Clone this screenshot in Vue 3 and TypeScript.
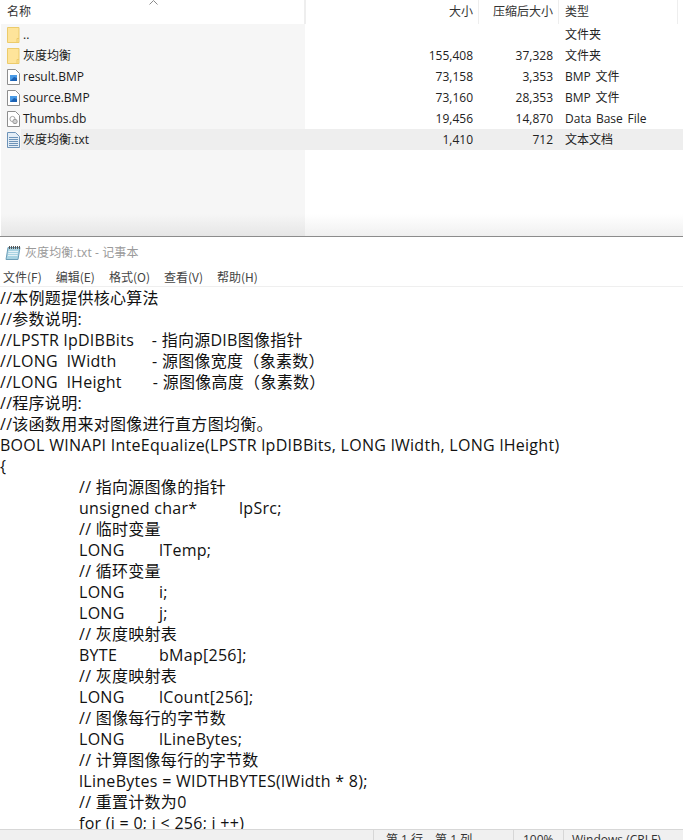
<script setup lang="ts">
interface Row { name: string; size: string; packed: string; type: string; icon: 'folder' | 'bmp' | 'db' | 'txt'; active?: boolean }
const rows: Row[] = [
  { name: '..', size: '', packed: '', type: '文件夹', icon: 'folder' },
  { name: '灰度均衡', size: '155,408', packed: '37,328', type: '文件夹', icon: 'folder' },
  { name: 'result.BMP', size: '73,158', packed: '3,353', type: 'BMP 文件', icon: 'bmp' },
  { name: 'source.BMP', size: '73,160', packed: '28,353', type: 'BMP 文件', icon: 'bmp' },
  { name: 'Thumbs.db', size: '19,456', packed: '14,870', type: 'Data Base File', icon: 'db' },
  { name: '灰度均衡.txt', size: '1,410', packed: '712', type: '文本文档', icon: 'txt', active: true },
]
const menus = ['文件(F)', '编辑(E)', '格式(O)', '查看(V)', '帮助(H)']
const position = '第 1 行\uFF0C第 1 列'
const lines: string[] = [
  '//本例题提供核心算法', '//参数说明:', '//LPSTR lpDIBBits    - 指向源DIB图像指针',
  '//LONG  lWidth        - 源图像宽度\uFF08象素数\uFF09', '//LONG  lHeight       - 源图像高度\uFF08象素数\uFF09',
  '//程序说明:', '//该函数用来对图像进行直方图均衡。',
  'BOOL WINAPI InteEqualize(LPSTR lpDIBBits, LONG lWidth, LONG lHeight)', '{',
  '\t// 指向源图像的指针', '\tunsigned char*\tlpSrc;', '\t// 临时变量', '\tLONG\tlTemp;',
  '\t// 循环变量', '\tLONG\ti;', '\tLONG\tj;', '\t// 灰度映射表', '\tBYTE\tbMap[256];',
  '\t// 灰度映射表', '\tLONG\tlCount[256];', '\t// 图像每行的字节数', '\tLONG\tlLineBytes;',
  '\t// 计算图像每行的字节数', '\tlLineBytes = WIDTHBYTES(lWidth * 8);', '\t// 重置计数为0',
  '\tfor (i = 0; i < 256; i ++)',
]
</script>

<template>
  <div class="page">
    <section class="explorer">
      <div class="sort-mark"><svg width="9" height="5" viewBox="0 0 9 5"><path d="M.5 4.5 L4.5 .5 L8.5 4.5" fill="none" stroke="#8a8a8a" /></svg></div>
      <div class="head">
        <div class="c-name h-cell">名称</div>
        <div class="c-size h-cell sep">大小</div>
        <div class="c-packed h-cell sep">压缩后大小</div>
        <div class="c-type h-cell sep">类型</div>
      </div>
      <div class="list">
        <div class="name-shade"></div>
        <div class="fade"></div>
        <div v-for="r in rows" :key="r.name" class="row" :class="{ active: r.active }">
          <div class="c-name name-cell">
            <span class="ico">
              <svg v-if="r.icon === 'folder'" width="13" height="16" viewBox="0 0 13 16"><path d="M.5.5h11.5v15H.5z" fill="#fee49a" stroke="#eccb6a" /><path d="M10 15.5v-4h2" fill="none" stroke="#eccb6a" /></svg>
              <svg v-else width="13" height="16" viewBox="0 0 13 16">
                <path d="M.5.5h8l4 4v11H.5z" :fill="r.icon === 'txt' ? '#e3edf6' : '#fff'" :stroke="r.icon === 'txt' ? '#6d93b8' : '#8e8e8e'" />
                <template v-if="r.icon === 'bmp'"><rect x="3" y="6" width="7" height="6" fill="#4a9be6" /><path d="M3 12l4-4 3 1v3z" fill="#1c62b4" /></template>
                <template v-if="r.icon === 'db'"><circle cx="5.5" cy="8" r="2.6" fill="none" stroke="#a5a5a5" /><circle cx="8" cy="10.5" r="2.2" fill="#d0d0d0" stroke="#9a9a9a" /></template>
                <path v-if="r.icon === 'txt'" d="M2 5.5h9M2 7.5h9M2 9.5h9M2 11.5h9M2 13.5h9" stroke="#6d93b8" fill="none" />
              </svg>
            </span>
            <span class="name-text">{{ r.name }}</span>
          </div>
          <div class="c-size num">{{ r.size }}</div>
          <div class="c-packed num">{{ r.packed }}</div>
          <div class="c-type type-cell">{{ r.type }}</div>
        </div>
      </div>
    </section>

    <section class="notepad">
      <div class="title">
        <svg width="16" height="17" viewBox="0 0 16 17"><path d="M3 3.5h12l-2 12H1z" fill="#a8d3e2" stroke="#6e9fb8" /><path d="M4.5 2v3M6.5 2v3M8.5 2v3M10.5 2v3M12.5 2v3M14.5 2v3" stroke="#555" /><path d="M3.5 7.5h9.5M3.2 9.5h9.5M3 11.5h9.5" stroke="#e4f1f6" /></svg>
        <span>灰度均衡.txt - 记事本</span>
      </div>
      <div class="menu"><span v-for="m in menus" :key="m">{{ m }}</span></div>
      <div class="text">
        <div v-for="(l, i) in lines" :key="i" class="line" :class="{ tabbed: l.startsWith('\t') }">{{ l }}</div>
      </div>
      <div class="status">
        <span class="s s1"></span>
        <span class="s s2">{{ position }}</span>
        <span class="s s3">100%</span>
        <span class="s s4">Windows (CRLF)</span>
      </div>
    </section>
  </div>
</template>

<style>
html, body { margin: 0; background: #fff; }
</style>

<style scoped>
.page { width: 683px; height: 840px; overflow: hidden; display: flex; flex-direction: column; font-family: "Noto Sans CJK SC", "Liberation Sans", sans-serif; color: #1a1a1a; position: relative; }
.explorer { height: 236px; flex: none; border-bottom: 1px solid #8c8c8c; position: relative; font-family: "Open Sans", "Noto Sans CJK SC", sans-serif; font-size: 12px; }
.sort-mark { position: absolute; left: 149px; top: 0; line-height: 0; }
.head { display: flex; height: 24px; }
.h-cell { line-height: 23px; color: #333; }
.sep { border-left: 1px solid #eee; }
.c-name { width: 305px; flex: none; }
.c-size { width: 173px; flex: none; box-sizing: border-box; text-align: right; padding-right: 5px; }
.c-packed { width: 80px; flex: none; box-sizing: border-box; text-align: right; padding-right: 5px; }
.c-type { flex: 1; padding-left: 7px; }
.head .c-name { padding-left: 7px; box-sizing: border-box; border-right: 1px solid #eee; }
.head .c-type { border-right: 1px solid #eee; margin-right: 5px; padding-left: 6px; }
.list { position: relative; }
.name-shade { position: absolute; left: 1px; top: 0; width: 304px; height: 212px; background-image: linear-gradient(#f6f6f6 190px, #e6e6e6 212px); }
.fade { position: absolute; left: 305px; right: 0; top: 190px; height: 22px; background-image: linear-gradient(#ffffff, #f0f0f0); }
.row { display: flex; height: 21px; line-height: 21px; position: relative; }
.name-cell { display: flex; align-items: center; box-sizing: border-box; padding-left: 7px; height: 21px; }
.ico { width: 14px; flex: none; height: 16px; line-height: 0; }
.name-text { height: 21px; padding-left: 2px; flex: 1; }
.active .name-text, .active .num, .active .c-type { background: #eeeeee; }
.num { color: #222; }
.type-cell { color: #222; word-spacing: 1.5px; }
.notepad { flex: 1; min-height: 0; display: flex; flex-direction: column; position: relative; }
.title { height: 30px; display: flex; align-items: center; padding-left: 5px; gap: 4px; font-family: "Open Sans", "Noto Sans CJK SC", sans-serif; font-size: 12px; letter-spacing: 0.1px; color: #9a9a9a; flex: none; box-sizing: border-box; }
.menu { height: 19px; flex: none; display: flex; gap: 14px; padding-left: 3px; font-size: 12px; line-height: 19px; color: #444; border-bottom: 1px solid #efefef; }
.text { flex: 1; min-height: 0; overflow: hidden; font-family: "Open Sans", "Noto Sans CJK SC", sans-serif; font-size: 16px; letter-spacing: 0.28px; line-height: 21px; color: #111; padding-top: 1px; white-space: pre; tab-size: 80px; }
.line { height: 21px; }
.tabbed { margin-left: -1px; }
.status { position: absolute; left: 0; right: 0; bottom: 0; height: 11px; box-sizing: border-box; background: #f0f0f0; border-top: 1px solid #d7d7d7; display: flex; font-family: "Open Sans", "Noto Sans CJK SC", sans-serif; font-size: 12px; line-height: 20px; overflow: hidden; color: #333; }
.s { display: block; box-sizing: border-box; padding-left: 12px; border-left: 1px solid #d7d7d7; height: 100%; flex: none; }
.s1 { width: 373px; border-left: none; }
.s2 { width: 140px; }
.s3 { width: 50px; padding-left: 9px; }
.s4 { flex: 1; padding-left: 8px; }
</style>
